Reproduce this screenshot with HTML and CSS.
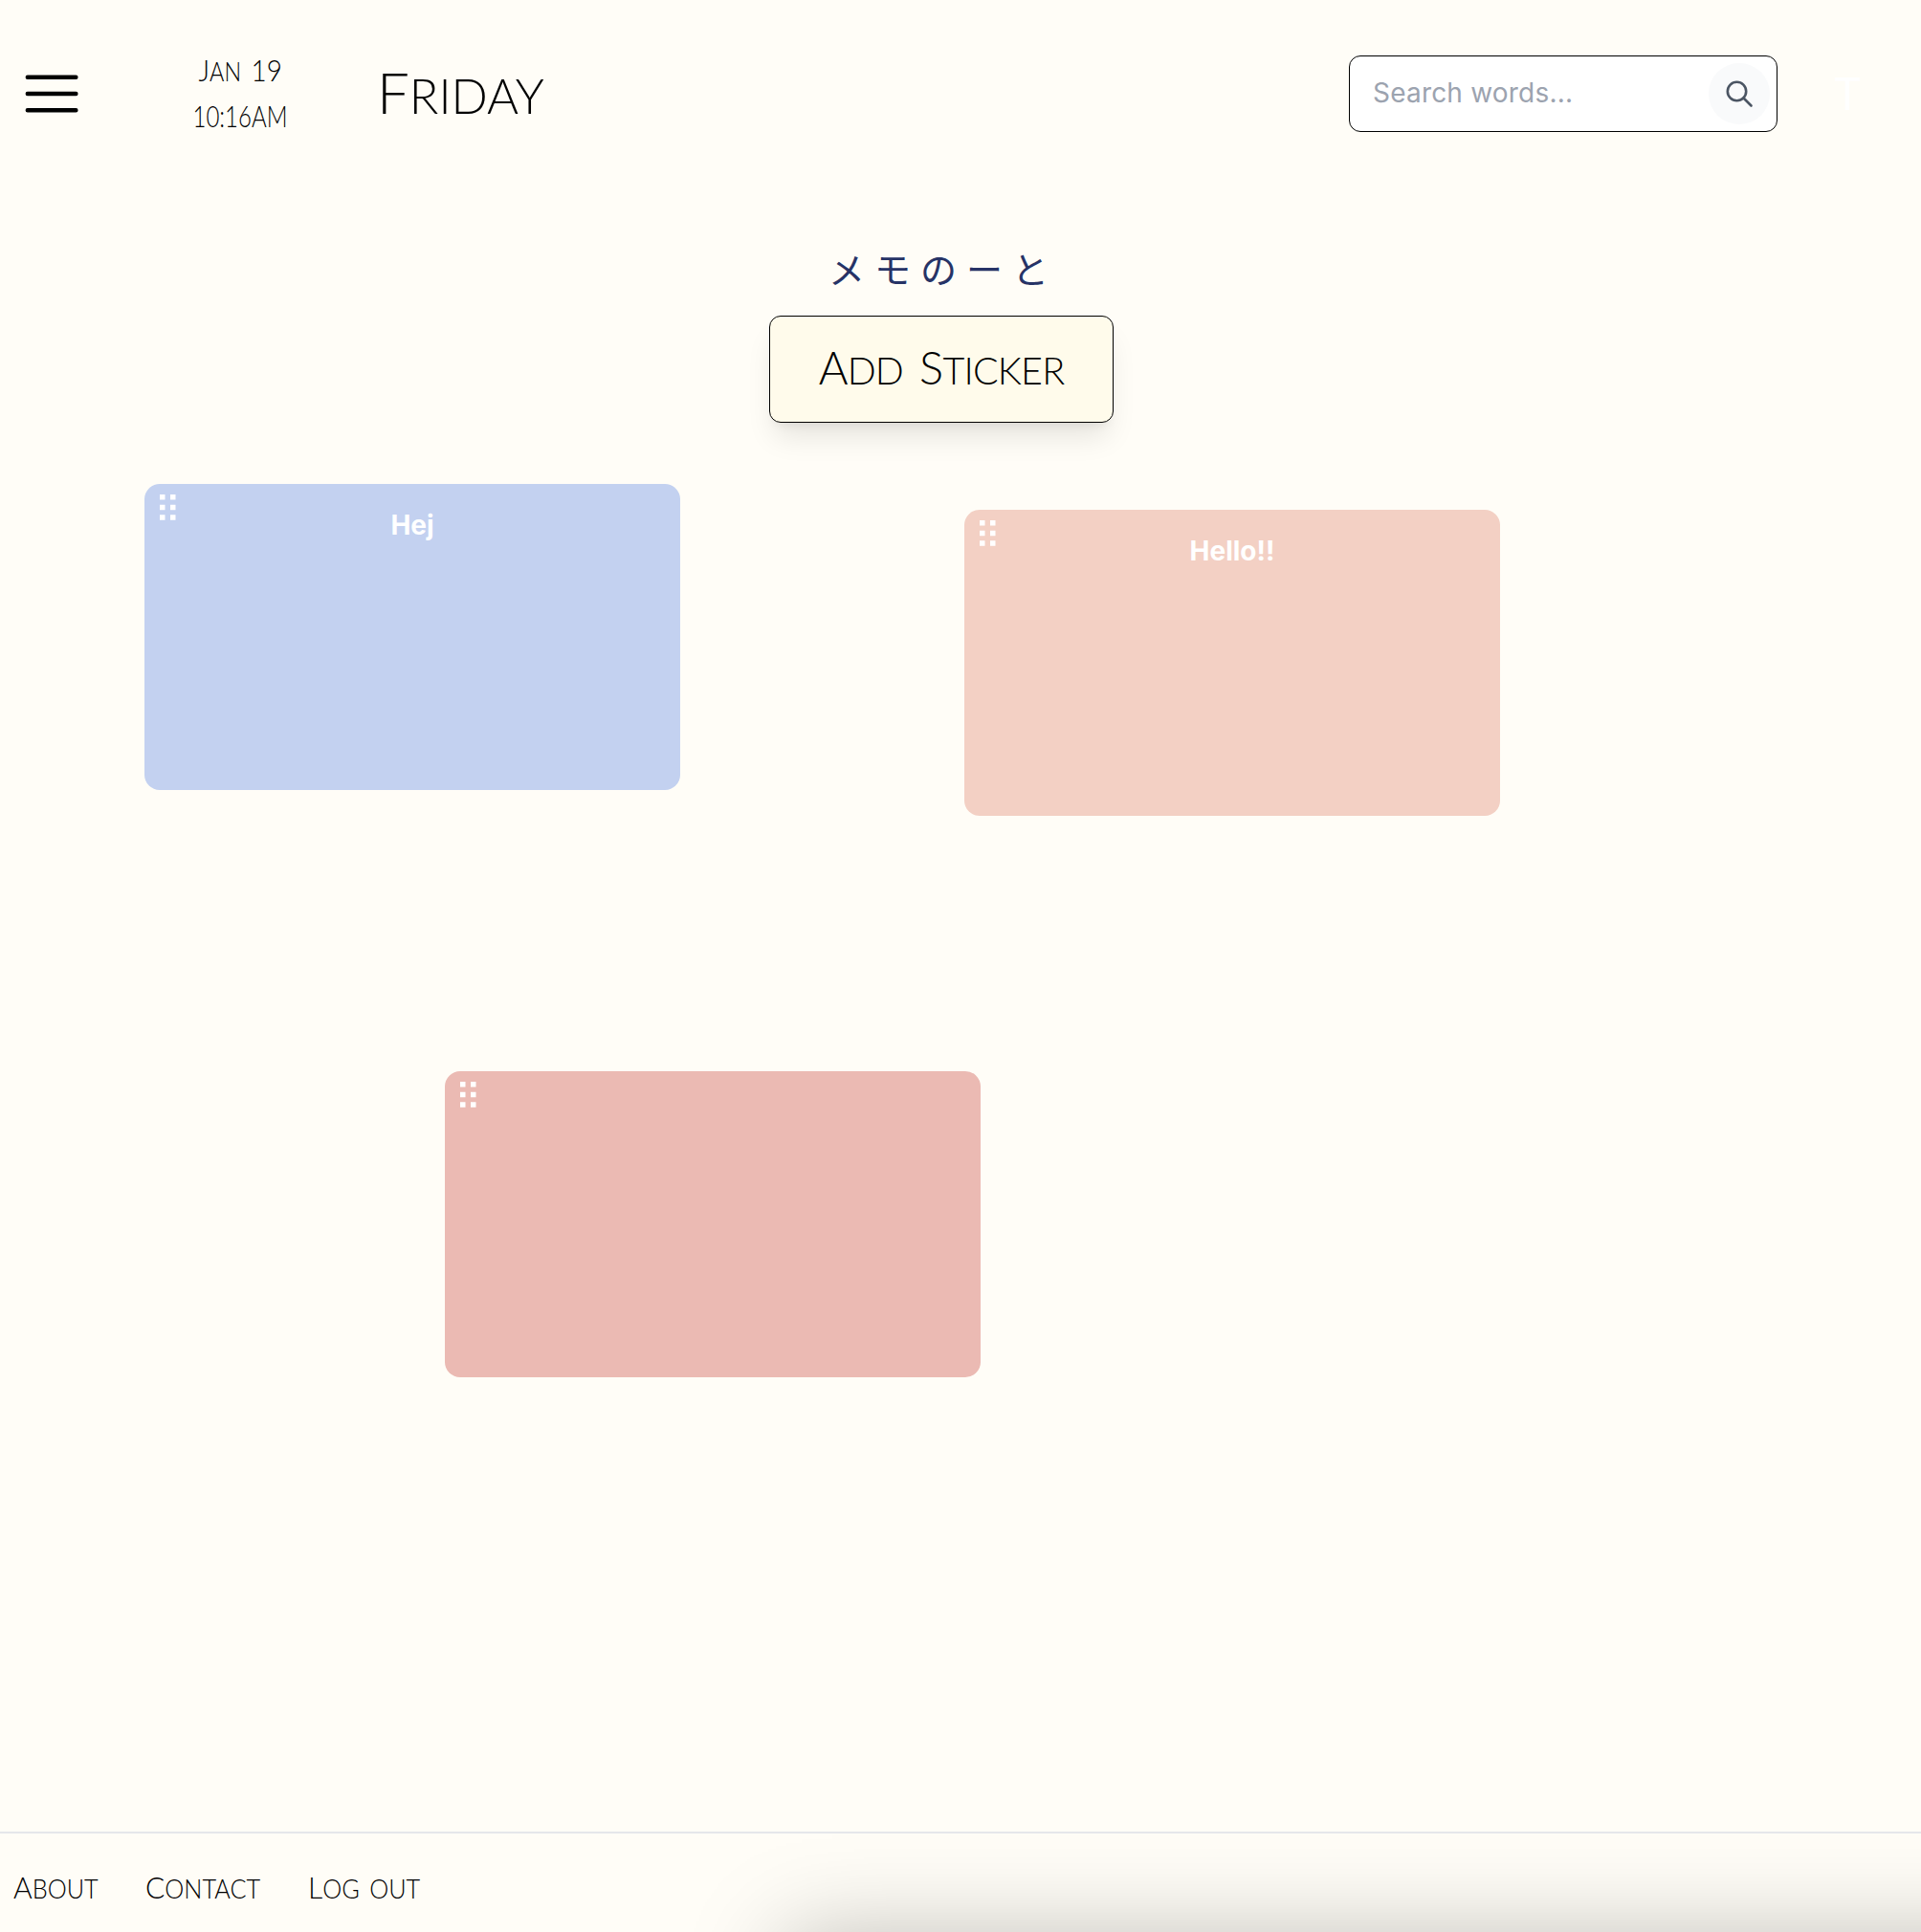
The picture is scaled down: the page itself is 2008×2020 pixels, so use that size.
FILE: index.html
```html
<!DOCTYPE html>
<html lang="en">
<head>
<meta charset="utf-8">
<title>メモのーと</title>
<link rel="stylesheet" href="styles.css">
</head>
<body>
<header class="topbar">
  <button class="menu" aria-label="Menu">
    <svg width="64" height="64" viewBox="0 0 64 64" fill="none" stroke="#000" stroke-width="4.4" stroke-linecap="round"><path d="M6.800 14.800H57.400M6.800 32H57.400M6.800 49.200H57.400"/></svg>
  </button>
  <div class="clock">
    <div class="line deco date"><span class="word">Jan</span><span class="word">19</span></div>
    <div class="line deco time">10:16AM</div>
  </div>
  <h1 class="day deco"><span class="word">Friday</span></h1>
  <div class="search">
    <span class="placeholder">Search words...</span>
    <span class="search-btn">
      <svg width="32" height="32" viewBox="0 0 32 32" fill="none" stroke="#4b5563" stroke-width="2.600" stroke-linecap="round"><circle cx="13.500" cy="13.500" r="9.700"/><path d="M20.500 20.500L28.500 28.500"/></svg>
    </span>
  </div>
  <span class="avatar">T</span>
</header>
<main class="board">
  <h2 class="title">メモのーと</h2>
  <button class="add deco"><span class="word w-add">Add</span><span class="word w-sticker">Sticker</span></button>
  <article class="note blue"><svg class="grip" width="17" height="27" viewBox="0 0 17 27" fill="#fff"><path d="M0 0h5.500v5.500H0zM11 0h5.500v5.500H11zM0 10.700h5.500v5.500H0zM11 10.700h5.500v5.500H11zM0 21.300h5.500v5.500H0zM11 21.300h5.500v5.500H11z"/></svg><p class="note-text hej">Hej</p></article>
  <article class="note peach"><svg class="grip" width="17" height="27" viewBox="0 0 17 27" fill="#fff"><path d="M0 0h5.500v5.500H0zM11 0h5.500v5.500H11zM0 10.700h5.500v5.500H0zM11 10.700h5.500v5.500H11zM0 21.300h5.500v5.500H0zM11 21.300h5.500v5.500H11z"/></svg><p class="note-text hello">Hello!!</p></article>
  <article class="note rose"><svg class="grip" width="17" height="27" viewBox="0 0 17 27" fill="#fff"><path d="M0 0h5.500v5.500H0zM11 0h5.500v5.500H11zM0 10.700h5.500v5.500H0zM11 10.700h5.500v5.500H11zM0 21.300h5.500v5.500H0zM11 21.300h5.500v5.500H11z"/></svg></article>
</main>
<footer class="footer">
  <a class="link deco about"><span class="word">About</span></a>
  <a class="link deco contact"><span class="word">Contact</span></a>
  <a class="link deco logout"><span class="word">Log</span><span class="word plain">out</span></a>
  <div class="drawer"></div>
</footer>
</body>
</html>
```
FILE: styles.css
```css
* { box-sizing: border-box; margin: 0; padding: 0; }
body {
  width: 2008px; height: 2020px; overflow: hidden;
  display: flex; flex-direction: column;
  background: #fffdf7; color: #000;
  font-family: Inter, "Noto Sans CJK JP", sans-serif;
}
button { border: 0; background: none; font: inherit; color: inherit; }
.deco { font-family: Lato, sans-serif; font-weight: 300; text-transform: uppercase; white-space: nowrap; }
.word { display: inline-block; font-size: .84em; }
.word::first-letter { font-size: 1.19em; }
.topbar { height: 196px; flex: none; display: flex; align-items: center; padding-left: 22px; }
.menu { width: 64px; height: 64px; }
.clock { width: 112px; margin-left: 109px; padding-bottom: 3px; display: flex; flex-direction: column; align-items: center; font-size: 32px; }
.line { height: 48px; line-height: 48px; display: flex; align-items: baseline; justify-content: center; gap: 12px; }
.date { transform: scaleX(.87); }
.date .word + .word { font-size: 1em; }
.date .word + .word::first-letter { font-size: 1em; }
.time { transform: scaleX(.75); }
.day { margin-left: 87px; font-size: 60px; line-height: 80px; width: 180px; }
.search {
  margin-left: auto; width: 448px; height: 80px; flex: none;
  display: flex; align-items: center; justify-content: space-between;
  padding: 0 7px 0 24px; border: 1px solid #000; border-radius: 12px; background: #fff;
}
.placeholder { font-size: 28px; letter-spacing: .2px; padding-bottom: 2px; color: #9ca3af; white-space: nowrap; }
.search-btn { width: 64px; height: 64px; border-radius: 50%; background: #f9fafb; display: grid; place-items: center; }
.avatar { width: 150px; padding-left: 58px; font-size: 47px; line-height: 80px; color: #fff; }
.board { position: relative; flex: 1; display: flex; flex-direction: column; align-items: center; padding: 49px 40px 0 0; }
.title { font-size: 38px; line-height: 70px; font-weight: 400; letter-spacing: 10px; padding-left: 4px; color: #263366; font-family: "Noto Sans CJK JP", sans-serif; }
.add {
  margin-top: 15px; width: 360px; height: 112px; display: flex; justify-content: center; align-items: baseline; gap: 17px;
  border: 1px solid #000; border-radius: 12px; background: #fffbeb; font-size: 47px; line-height: 106px; font-weight: 300;
  letter-spacing: -.8px;
  box-shadow: 0 20px 30px -6px rgba(0,0,0,.1), 0 8px 12px -8px rgba(0,0,0,.1);
}
.note { position: absolute; width: 560px; height: 320px; border-radius: 16px; padding: 11px 16px; }
.grip { display: block; }
.note-text { margin-top: -16px; text-align: center; color: #fff; font-size: 28px; font-weight: 700; line-height: 42px; }
.blue { left: 151px; top: 310px; background: #c3d1f0; }
.peach { left: 1008px; top: 337px; background: #f3d0c4; }
.rose { left: 465px; top: 924px; background: #ebbab3; }
.footer { position: relative; height: 105px; flex: none; display: flex; align-items: center; border-top: 2px solid #e5e7eb; padding: 8px 0 0 14px; font-size: 32px; overflow: hidden; }
.link { display: flex; align-items: baseline; gap: 11px; transform-origin: left; transform: scaleX(.94); }
.about { width: 138px; }
.contact { width: 170px; }
.plain::first-letter { font-size: 1em; }
.drawer { position: absolute; left: 822px; top: 110px; width: 1400px; height: 400px; box-shadow: 0 0 96px rgba(0,0,0,.27); }
```
